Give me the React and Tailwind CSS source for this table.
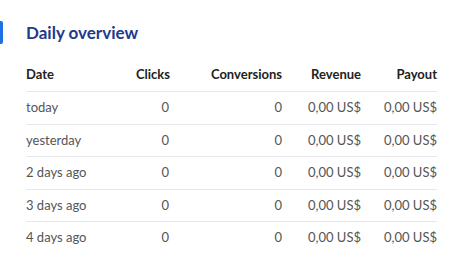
import React from "react";

const rows = [
  ["today", "0", "0", "0,00 US$", "0,00 US$"],
  ["yesterday", "0", "0", "0,00 US$", "0,00 US$"],
  ["2 days ago", "0", "0", "0,00 US$", "0,00 US$"],
  ["3 days ago", "0", "0", "0,00 US$", "0,00 US$"],
  ["4 days ago", "0", "0", "0,00 US$", "0,00 US$"],
];

const grid = "grid grid-cols-[84px_60px_112px_79px_76px] items-center";

export default function App() {
  return (
    <div className="w-[464px] h-[274px] bg-white pt-[21px] font-['Lato','Liberation_Sans',sans-serif]">
      <div className="flex items-center h-[23px]">
        <div className="w-[3px] h-[23px] bg-[#1f6fe5] rounded-r-[2px]" />
        <h2 className="ml-[23px] text-[17px] font-bold leading-none text-[#213a8c]">
          Daily overview
        </h2>
      </div>
      <div className="ml-[26px] w-[411px] mt-[14px]">
        <div className={`${grid} h-[33px] text-[13px] font-bold text-[#222]`}>
          <div>Date</div>
          <div className="text-right">Clicks</div>
          <div className="text-right">Conversions</div>
          <div className="text-right">Revenue</div>
          <div className="text-right">Payout</div>
        </div>
        {rows.map((r, i) => (
          <div
            key={i}
            className={`${grid} h-[32.5px] border-t border-[#e8e8ec] text-[13px] text-[#555]`}
          >
            <div>{r[0]}</div>
            <div className="text-right pr-[1px]">{r[1]}</div>
            <div className="text-right">{r[2]}</div>
            <div className="text-right">{r[3]}</div>
            <div className="text-right">{r[4]}</div>
          </div>
        ))}
      </div>
    </div>
  );
}
